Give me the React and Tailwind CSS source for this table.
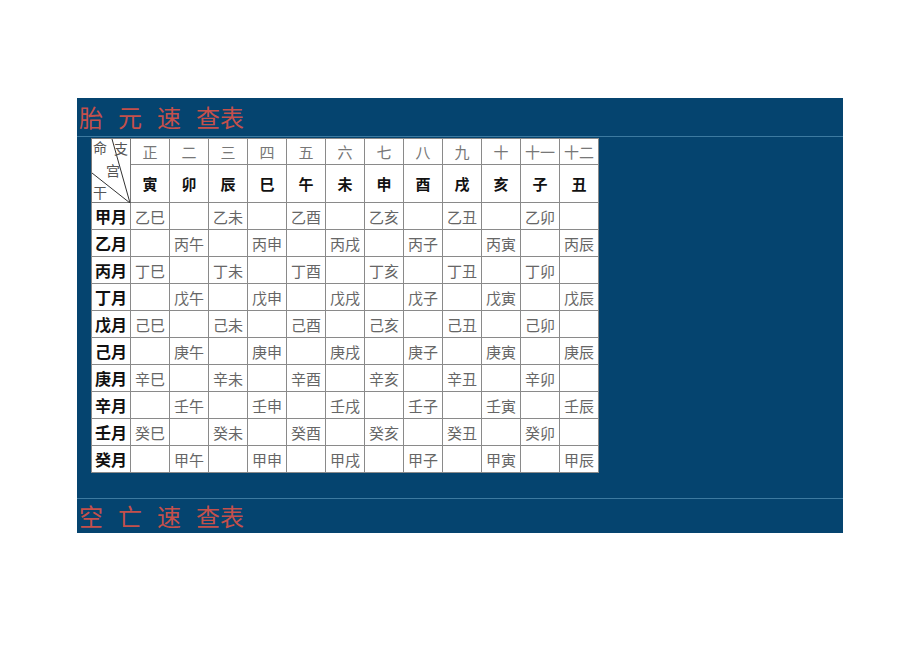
import React from 'react';

const months = ['正', '二', '三', '四', '五', '六', '七', '八', '九', '十', '十一', '十二'];
const branches = ['寅', '卯', '辰', '巳', '午', '未', '申', '酉', '戌', '亥', '子', '丑'];

const rows = [
    ['甲月', ['乙巳', '', '乙未', '', '乙酉', '', '乙亥', '', '乙丑', '', '乙卯', '']],
    ['乙月', ['', '丙午', '', '丙申', '', '丙戌', '', '丙子', '', '丙寅', '', '丙辰']],
    ['丙月', ['丁巳', '', '丁未', '', '丁酉', '', '丁亥', '', '丁丑', '', '丁卯', '']],
    ['丁月', ['', '戊午', '', '戊申', '', '戊戌', '', '戊子', '', '戊寅', '', '戊辰']],
    ['戊月', ['己巳', '', '己未', '', '己酉', '', '己亥', '', '己丑', '', '己卯', '']],
    ['己月', ['', '庚午', '', '庚申', '', '庚戌', '', '庚子', '', '庚寅', '', '庚辰']],
    ['庚月', ['辛巳', '', '辛未', '', '辛酉', '', '辛亥', '', '辛丑', '', '辛卯', '']],
    ['辛月', ['', '壬午', '', '壬申', '', '壬戌', '', '壬子', '', '壬寅', '', '壬辰']],
    ['壬月', ['癸巳', '', '癸未', '', '癸酉', '', '癸亥', '', '癸丑', '', '癸卯', '']],
    ['癸月', ['', '甲午', '', '甲申', '', '甲戌', '', '甲子', '', '甲寅', '', '甲辰']],
];

const cjk = "font-['Noto_Sans_CJK_SC','Noto_Sans_CJK_JP',sans-serif]";

const CornerCell = () => (
    <td rowSpan={2} className="relative border border-[#7a7a7a] p-0 w-[39px]">
        <svg className="absolute inset-0" width="39" height="64" viewBox="0 0 39 64">
            <line x1="20" y1="0" x2="38" y2="64" stroke="#333" strokeWidth="1" />
            <line x1="0" y1="34" x2="38" y2="64" stroke="#333" strokeWidth="1" />
        </svg>
        <span className="absolute left-[1px] top-[1px] text-[14px] leading-none text-[#555]">命</span>
        <span className="absolute right-[2px] top-[2px] text-[14px] leading-none text-[#555]">支</span>
        <span className="absolute left-[14px] top-[24px] text-[14px] leading-none text-[#555]">宫</span>
        <span className="absolute left-[1px] top-[46px] text-[14px] leading-none text-[#555]">干</span>
    </td>
);

const TitleBar = ({ words, h }) => (
    <div className={`${h} flex items-center gap-[15px] pl-[2px] text-[24px] leading-none text-[#c4504b] ${cjk}`}>
        {words.map((w) => (
            <span key={w}>{w}</span>
        ))}
    </div>
);

const App = () => {
    return (
        <div className="w-[920px] h-[651px] bg-white pt-[98px] pl-[77px]">
            <div className="w-[766px] bg-[#05446f]">
                <TitleBar h="h-[38px]" words={['胎', '元', '速', '查表']} />
                <div className="h-px bg-[#3d7aa0]" />
                <div className="pl-[14px] pt-px pb-[25px]">
                    <table className={`border-collapse bg-white border border-[#555] table-fixed ${cjk}`}>
                        <tbody>
                            <tr className="h-[26px]">
                                <CornerCell />
                                {months.map((m) => (
                                    <td key={m} className="w-[39px] border border-[#8a8a8a] p-0 text-center text-[15px] leading-none text-[#777] whitespace-nowrap">
                                        {m}
                                    </td>
                                ))}
                            </tr>
                            <tr className="h-[38px]">
                                {branches.map((b) => (
                                    <td key={b} className="border border-[#8a8a8a] p-0 text-center text-[15px] font-bold leading-none text-[#111]">
                                        {b}
                                    </td>
                                ))}
                            </tr>
                            {rows.map(([label, cells]) => (
                                <tr key={label} className="h-[27px]">
                                    <td className="border border-[#8a8a8a] p-0 text-center text-[16px] font-bold leading-none text-[#111] whitespace-nowrap">
                                        {label}
                                    </td>
                                    {cells.map((c, i) => (
                                        <td key={i} className="border border-[#8a8a8a] p-0 text-center text-[15px] leading-none text-[#666] whitespace-nowrap">
                                            {c}
                                        </td>
                                    ))}
                                </tr>
                            ))}
                        </tbody>
                    </table>
                </div>
                <div className="h-px bg-[#3d7aa0]" />
                <TitleBar h="h-[34px]" words={['空', '亡', '速', '查表']} />
            </div>
        </div>
    );
};

export default App;
